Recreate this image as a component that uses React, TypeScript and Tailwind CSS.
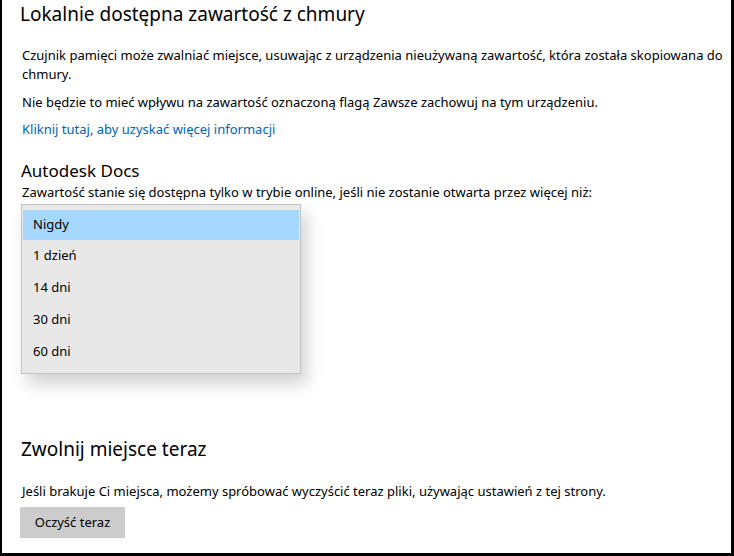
const FONT = "font-['Noto_Sans',sans-serif]"

const OPTIONS = ['1 dzień', '14 dni', '30 dni', '60 dni']

export default function App() {
  return (
    <div className={`${FONT} h-[556px] w-[734px] overflow-hidden border-b-[3px] border-l-2 border-r-[3px] border-black bg-white text-black`}>
      <div className="pl-[20px] pr-[2px]">
        <h1 className="-ml-[2px] h-[30px] text-[19px] leading-[28px]">Lokalnie dostępna zawartość z chmury</h1>

        <p className="mt-[16px] text-[13px] leading-[19px]">
          Czujnik pamięci może zwalniać miejsce, usuwając z urządzenia nieużywaną zawartość, która została skopiowana do chmury.
        </p>
        <p className="mt-[9px] text-[13px] leading-[19px]">
          Nie będzie to mieć wpływu na zawartość oznaczoną flagą Zawsze zachowuj na tym urządzeniu.
        </p>
        <a className="mt-[8px] block text-[13px] leading-[19px] text-[#0066b4]">Kliknij tutaj, aby uzyskać więcej informacji</a>

        <h2 className="-ml-[1px] mt-[20px] text-[17px] leading-[24px]">Autodesk Docs</h2>
        <p className="text-[13px] leading-[19px]">
          Zawartość stanie się dostępna tylko w trybie online, jeśli nie zostanie otwarta przez więcej niż:
        </p>

        <div className="-ml-[1px] mt-[2px] w-[280px] border border-[#c4c4c4] bg-[#e8e8e8] px-px py-[5px] shadow-[6px_10px_16px_rgba(0,0,0,0.18)]">
          <div className="h-[30px] bg-[#a6d8ff] pl-[10px] text-[13px] leading-[29px]">Nigdy</div>
          {OPTIONS.map((o) => (
            <div key={o} className="h-[32px] pl-[10px] text-[13px] leading-[31px]">
              {o}
            </div>
          ))}
        </div>

        <h2 className="-ml-[1px] mt-[61px] text-[19px] leading-[28px]">Zwolnij miejsce teraz</h2>
        <p className="mt-[19px] text-[13px] leading-[19px]">
          Jeśli brakuje Ci miejsca, możemy spróbować wyczyścić teraz pliki, używając ustawień z tej strony.
        </p>
        <button className="-ml-[2px] mt-[6px] block h-[31px] w-[105px] bg-[#cccccc] text-[13px]">Oczyść teraz</button>
      </div>
    </div>
  )
}
